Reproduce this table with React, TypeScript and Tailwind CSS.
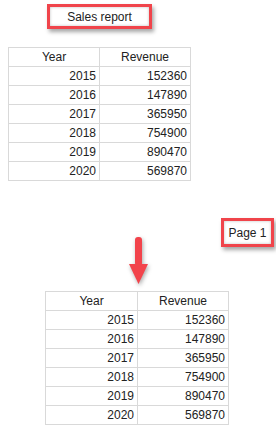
const rows: [number, number][] = [
  [2015, 152360],
  [2016, 147890],
  [2017, 365950],
  [2018, 754900],
  [2019, 890470],
  [2020, 569870],
];

const DataTable = ({ cols }: { cols: string }) => (
  <div className={`grid ${cols} border-l border-t border-[#d9d9d9] w-fit`}>
    <div className="h-[19px] border-b border-r border-[#d9d9d9] text-center leading-[18px]">Year</div>
    <div className="h-[19px] border-b border-r border-[#d9d9d9] text-center leading-[18px]">Revenue</div>
    {rows.map(([year, revenue]) => (
      <div key={year} className="contents">
        <div className="h-[19px] border-b border-r border-[#d9d9d9] pr-[3px] text-right leading-[18px]">{year}</div>
        <div className="h-[19px] border-b border-r border-[#d9d9d9] pr-[3px] text-right leading-[18px]">{revenue}</div>
      </div>
    ))}
  </div>
);

const Callout = ({ children, className }: { children: React.ReactNode; className: string }) => (
  <div
    className={`flex items-center justify-center border-[3px] border-[#f0444b] bg-white shadow-[2px_3px_4px_rgba(0,0,0,0.35),inset_0_0_3px_rgba(0,0,0,0.25)] ${className}`}
  >
    {children}
  </div>
);

export default function App() {
  return (
    <div className="w-[276px] h-[435px] bg-white text-[12px] text-[#222] font-['Liberation_Sans',Arial,sans-serif] overflow-hidden">
      <div className="pt-[4px] pl-[47px]">
        <Callout className="w-[105px] h-[25px]">Sales report</Callout>
      </div>

      <div className="mt-[18px] ml-[8px]">
        <DataTable cols="grid-cols-[91px_91px]" />
      </div>

      <div className="mt-[37px] flex items-start h-[66px]">
        <svg
          className="ml-[129px] mt-[19px] drop-shadow-[1px_2px_2px_rgba(0,0,0,0.35)]"
          width="19"
          height="48"
          viewBox="0 0 19 48"
        >
          <rect x="6" y="0" width="7" height="29" rx="3" fill="#f2434b" />
          <polygon points="0,27 19,27 9.5,47" fill="#f2434b" />
        </svg>
        <Callout className="ml-auto mr-[2px] w-[53px] h-[29px]">Page 1</Callout>
      </div>

      <div className="mt-[7px] ml-[45px]">
        <DataTable cols="grid-cols-[92px_91px]" />
      </div>
    </div>
  );
}
